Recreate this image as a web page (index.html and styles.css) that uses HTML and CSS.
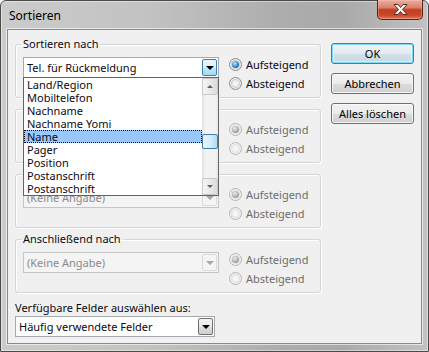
FILE: index.html
```html
<!DOCTYPE html>
<html lang="de">
<head>
  <meta charset="UTF-8" />
  <meta name="viewport" content="width=device-width, initial-scale=1.0"/>
  <title>Sortieren</title>
  <link rel="stylesheet" href="styles.css">
</head>
<body>
  <div class="window">
    <div class="titlebar">
      <span class="title">Sortieren</span>
      <button class="close" aria-label="Schließen">
        <svg width="15" height="11" viewBox="0 0 15 11">
          <polygon points="1,0.5 5,0.5 7.5,3.5 10,0.5 14,0.5 9.5,5.5 14,10.5 10,10.5 7.5,7.5 5,10.5 1,10.5 5.5,5.5" fill="#fff" stroke="#5b2a20" stroke-width="1"/>
        </svg>
      </button>
    </div>

    <div class="client">
      <div class="fields">
        <fieldset class="group">
          <legend>Sortieren nach</legend>
          <div class="group-body">
            <div class="combo active">
              <span class="combo-text">Tel. für Rückmeldung</span>
              <span class="combo-btn"></span>
              <div class="droplist">
                <ul class="items">
                  <li>Land/Region</li>
                  <li>Mobiltelefon</li>
                  <li>Nachname</li>
                  <li>Nachname Yomi</li>
                  <li class="selected">Name</li>
                  <li>Pager</li>
                  <li>Position</li>
                  <li>Postanschrift</li>
                  <li>Postanschrift</li>
                </ul>
                <div class="scrollbar">
                  <span class="sb-arrow up"></span>
                  <div class="sb-track"><span class="sb-thumb" style="margin-top: 39px"></span></div>
                  <span class="sb-arrow down"></span>
                </div>
              </div>
            </div>
            <div class="order">
              <div class="option"><span class="radio checked"></span>Aufsteigend</div>
              <div class="option"><span class="radio"></span>Absteigend</div>
            </div>
          </div>
        </fieldset>

        <!-- the next two groups sit under the open list -->
        <fieldset class="group">
          <legend class="blank"></legend>
          <div class="group-body">
            <div class="combo disabled">
              <span class="combo-text"></span>
              <span class="combo-btn"></span>
            </div>
            <div class="order">
              <div class="option disabled"><span class="radio checked"></span>Aufsteigend</div>
              <div class="option disabled"><span class="radio"></span>Absteigend</div>
            </div>
          </div>
        </fieldset>

        <fieldset class="group">
          <legend class="blank"></legend>
          <div class="group-body">
            <div class="combo disabled">
              <span class="combo-text">(Keine Angabe)</span>
              <span class="combo-btn"></span>
            </div>
            <div class="order">
              <div class="option disabled"><span class="radio checked"></span>Aufsteigend</div>
              <div class="option disabled"><span class="radio"></span>Absteigend</div>
            </div>
          </div>
        </fieldset>

        <fieldset class="group">
          <legend>Anschließend nach</legend>
          <div class="group-body">
            <div class="combo disabled">
              <span class="combo-text">(Keine Angabe)</span>
              <span class="combo-btn"></span>
            </div>
            <div class="order">
              <div class="option disabled"><span class="radio checked"></span>Aufsteigend</div>
              <div class="option disabled"><span class="radio"></span>Absteigend</div>
            </div>
          </div>
        </fieldset>

        <div class="source-label">Verfügbare Felder auswählen aus:</div>
        <div class="combo source">
          <span class="combo-text">Häufig verwendete Felder</span>
          <span class="combo-btn"></span>
        </div>
      </div>

      <div class="buttons">
        <button class="btn default">OK</button>
        <button class="btn">Abbrechen</button>
        <button class="btn">Alles löschen</button>
      </div>
    </div>
  </div>
</body>
</html>
```

FILE: styles.css
```css
* {
  box-sizing: border-box;
}

body {
  margin: 0;
  background: #fff;
  font-family: "Noto Sans", "Open Sans", sans-serif;
  font-size: 11px;
  color: #0a0a14;
}

.window {
  width: 429px;
  height: 352px;
  border: 1px solid #4a4a4a;
  border-radius: 6px 6px 0 0;
  padding: 0 6px 7px;
  display: flex;
  flex-direction: column;
  background: linear-gradient(90deg, #cbcbcb 0%, #c2c2c2 35%, #adadad 65%, #a9a9a9 80%, #c2c2c2 100%);
  box-shadow: inset 0 0 0 1px rgba(255, 255, 255, 0.45);
}

.titlebar {
  height: 28px;
  margin: 0 -6px;
  padding: 0 5px 0 8px;
  display: flex;
  align-items: flex-start;
}

.title {
  margin-top: 7px;
  line-height: 16px;
  font-size: 12px;
  color: #000;
}

.close {
  margin-left: auto;
  margin-top: -1px;
  width: 46px;
  height: 20px;
  padding: 0;
  border: 1px solid #5a2319;
  border-top: none;
  border-radius: 0 0 5px 5px;
  background: linear-gradient(#eab0a2, #d8806b 40%, #c33e22 52%, #c9482c 80%, #dd7a5a);
  box-shadow: inset 0 0 0 1px rgba(255, 200, 180, 0.35);
  display: flex;
  align-items: center;
  justify-content: center;
}

.client {
  flex: 1;
  display: flex;
  gap: 10px;
  padding: 6px 7px 0;
  background: #f0f0f0;
  border: 1px solid #8a8a8a;
  box-shadow: 0 0 0 1px rgba(255, 255, 255, 0.6);
}

.fields {
  width: 306px;
  display: flex;
  flex-direction: column;
}

.group {
  min-width: 0;
  margin: 0 0 3px;
  padding: 5px 0 4px 7px;
  border: 1px solid #d5d5d5;
  border-radius: 3px;
  box-shadow: inset 1px 1px 0 #fff, 1px 1px 0 #fff;
}

.group legend {
  margin-left: -2px;
  padding: 0 2px;
  line-height: 16px;
}

.group legend.blank {
  height: 16px;
  padding: 0;
}

.group-body {
  display: flex;
  align-items: flex-start;
}

/* combo boxes */
.combo {
  position: relative;
  display: flex;
  width: 196px;
  height: 21px;
  background: #fff;
  border: 1px solid #a4a8b0;
}

.combo-text {
  flex: 1;
  padding-left: 3px;
  line-height: 19px;
  white-space: nowrap;
  overflow: hidden;
}

.combo-btn {
  width: 15px;
  margin: 1px;
  border: 1px solid #707070;
  border-radius: 2px;
  background: linear-gradient(#f4f4f4, #ebebeb 50%, #dddddd 51%, #d0d0d0);
  display: flex;
  align-items: center;
  justify-content: center;
}

.combo-btn::before {
  content: "";
  border-left: 4px solid transparent;
  border-right: 4px solid transparent;
  border-top: 4px solid #000;
  margin-top: 1px;
}

.combo.active .combo-btn {
  border-color: #3c7fb1;
  background: linear-gradient(#eaf6fd, #d9f0fc 50%, #bee6fd 51%, #a7d9f5);
}

.combo.disabled {
  background: #f4f4f4;
  border-color: #c5c5c5;
  color: #8a8a8a;
}

.combo.disabled .combo-btn {
  border-color: #dadada;
  background: #f4f4f4;
}

.combo.disabled .combo-btn::before {
  border-top-color: #a6a6a6;
}

.combo.source {
  width: 200px;
}

/* open list */
.droplist {
  position: absolute;
  top: 19px;
  left: -1px;
  z-index: 2;
  width: 196px;
  height: 119px;
  display: flex;
  background: #fff;
  border: 1px solid #646464;
}

.items {
  flex: 1;
  margin: 0;
  padding: 0;
  list-style: none;
}

.items li {
  height: 13px;
  line-height: 13px;
  padding-left: 3px;
  white-space: nowrap;
}

.items li.selected {
  background: #99c8fc;
  outline: 1px dotted #000;
  outline-offset: -1px;
}

.scrollbar {
  width: 16px;
  display: flex;
  flex-direction: column;
  background: linear-gradient(90deg, #e2e2e2, #f3f3f3 25%, #f3f3f3 80%, #e8e8e8);
}

.sb-arrow {
  height: 17px;
  border: 1px solid #c8c8c8;
  border-radius: 2px;
  background: linear-gradient(90deg, #f5f5f5, #e9e9e9 50%, #dcdcdc);
  display: flex;
  align-items: center;
  justify-content: center;
}

.sb-arrow::before {
  content: "";
  border-left: 3px solid transparent;
  border-right: 3px solid transparent;
}

.sb-arrow.up::before {
  border-bottom: 3px solid #606060;
}

.sb-arrow.down::before {
  border-top: 3px solid #606060;
}

.sb-track {
  flex: 1;
  display: flex;
  flex-direction: column;
}

.sb-thumb {
  height: 15px;
  border: 1px solid #3c7fb1;
  border-radius: 2px;
  background: linear-gradient(90deg, #e6f5fd, #d6eefb 50%, #aedcf5);
}

/* radios */
.order {
  margin-left: 10px;
  margin-top: -2px;
}

.option {
  display: flex;
  align-items: center;
  height: 19px;
  white-space: nowrap;
}

.radio {
  position: relative;
  width: 13px;
  height: 13px;
  margin-right: 4px;
  border-radius: 50%;
  border: 1px solid #8b8c8c;
  background: radial-gradient(circle, #f3f3f3 0 2px, #d5d5d5 4px, #e9e9e9 5px, #fbfbfb 6px);
}

.radio.checked::after {
  content: "";
  position: absolute;
  left: 2px;
  top: 2px;
  width: 7px;
  height: 7px;
  border-radius: 50%;
  background: radial-gradient(circle at 40% 35%, #b9ecff, #2a8ad0 55%, #0a4a86);
}

.option.disabled {
  color: #6d6d6d;
}

.option.disabled .radio {
  border-color: #b4b4b4;
  background: radial-gradient(circle, #f6f6f6 0 2px, #e3e3e3 4px, #f0f0f0 5px, #fcfcfc 6px);
}

.option.disabled .radio.checked::after {
  background: radial-gradient(circle at 40% 35%, #eeeeee, #a8a8a8 60%, #8a8a8a);
}

.source-label {
  margin-top: 4px;
  line-height: 16px;
}

/* buttons */
.buttons {
  width: 83px;
  display: flex;
  flex-direction: column;
  gap: 9px;
  padding-top: 7px;
}

.btn {
  height: 21px;
  padding: 0;
  font: inherit;
  color: #000;
  border: 1px solid #707070;
  border-radius: 3px;
  background: linear-gradient(#f2f2f2, #ebebeb 50%, #dddddd 51%, #cfcfcf);
  box-shadow: inset 0 0 0 1px rgba(255, 255, 255, 0.75);
}

.btn.default {
  border-color: #3c7fb1;
  background: linear-gradient(#eef4f8, #e2ebf1 50%, #d3e0e8 51%, #c8d8e2);
  box-shadow: inset 0 0 0 1px #7fd6f5, inset 0 0 0 2px rgba(255, 255, 255, 0.5);
}
```
